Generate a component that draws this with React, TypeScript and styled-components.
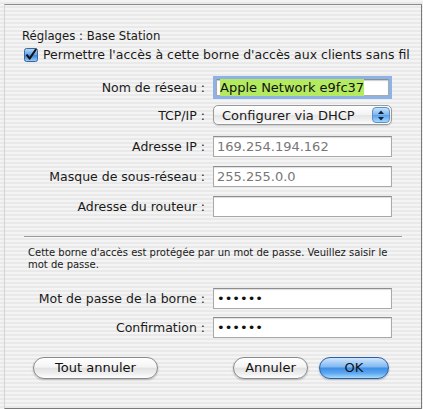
import React from 'react'
import { styled, createGlobalStyle } from 'styled-components'

const GlobalStyle = createGlobalStyle`
  html, body {
    margin: 0;
    padding: 0;
  }
  body {
    width: 423px;
    height: 409px;
    overflow: hidden;
    font-family: "DejaVu Sans", "Noto Sans", sans-serif;
    background: repeating-linear-gradient(to bottom, #f4f4f4 0px, #f4f4f4 2px, #e9e9e9 2px, #e9e9e9 4px);
  }
`

const Panel = styled.div`
  box-sizing: border-box;
  margin: 4px 2px 0 4px;
  width: 418px;
  height: 405px;
  border-top: 1px solid #8c8c8c;
  border-right: 1px solid #7a7a7a;
  border-bottom: 1px solid #7a7a7a;
  border-left: 1px solid #d4d4d4;
  display: flex;
  flex-direction: column;
  color: #1a1a1a;
`

const Title = styled.div`
  margin: 23px 0 0 17px;
  font-size: 11.7px;
  line-height: 16px;
`

const CheckRow = styled.label`
  margin: 3px 6px 0 19px;
  display: flex;
  align-items: center;
  gap: 5px;
  font-size: 12.5px;
  line-height: 16px;
  white-space: nowrap;
`

const FieldRow = styled.div<{ $top: number; $h: number }>`
  margin-top: ${p => p.$top}px;
  height: ${p => p.$h}px;
  display: flex;
  align-items: center;
  gap: 8px;
`

const Label = styled.div`
  width: 200px;
  text-align: right;
  font-size: 12.5px;
  white-space: nowrap;
`

const Field = styled.div<{ $focus?: boolean; $muted?: boolean }>`
  box-sizing: border-box;
  width: 179px;
  height: 100%;
  background: #fff;
  border: 1px solid #a9a9a9;
  border-top-color: #8d8d8d;
  display: flex;
  align-items: center;
  padding-left: 3px;
  font-size: 13px;
  color: ${p => (p.$muted ? '#777' : '#111')};
  box-shadow: ${p => (p.$focus ? '0 0 0 3px #8db3e6, inset 0 1px 1px #ccc' : 'inset 0 1px 1px #dedede')};
  ${p => (p.$focus ? 'height: 17px; margin: 0 3px 0 3px; width: 173px;' : '')}
`

const Highlight = styled.span`
  background: #b3ea5f;
  padding: 1px 0;
`

const Popup = styled.div`
  box-sizing: border-box;
  width: 179px;
  height: 100%;
  border: 1px solid #9a9a9a;
  border-radius: 5px;
  background: linear-gradient(to bottom, #ffffff 0%, #f2f2f2 50%, #e4e4e4 51%, #fbfbfb 100%);
  display: flex;
  align-items: center;
  justify-content: space-between;
  padding: 0 1px 0 8px;
  font-size: 13px;
  box-shadow: 0 1px 1px rgba(0, 0, 0, 0.15);
`

const Stepper = styled.div`
  width: 18px;
  height: 16px;
  border-radius: 4px;
  background: linear-gradient(to bottom, #c4e2fb 0%, #7ab6f0 50%, #5a9eea 51%, #a6d8fb 100%);
  border: 1px solid #5f8fc8;
  box-sizing: border-box;
  display: flex;
  align-items: center;
  justify-content: center;
`

const Separator = styled.div`
  margin: 19px 19px 0 19px;
  height: 1px;
  background: #9b9b9b;
  border-bottom: 1px solid #f8f8f8;
`

const Note = styled.p`
  margin: 9px 30px 0 23px;
  font-size: 10px;
  line-height: 12px;
`

const ButtonBar = styled.div`
  margin: 19px 32px 0 28px;
  display: flex;
  align-items: center;
  gap: 11px;
`

const Button = styled.button<{ $w: number; $default?: boolean }>`
  box-sizing: border-box;
  width: ${p => p.$w}px;
  height: 22px;
  border-radius: 11px;
  font-family: inherit;
  font-size: 13px;
  padding: 0;
  color: #111;
  border: 1px solid ${p => (p.$default ? '#2a5fa8' : '#8a8a8a')};
  background: ${p =>
    p.$default
      ? 'linear-gradient(to bottom, #cfe6fb 0%, #7fb8f2 45%, #3f8ee6 50%, #5aa6f0 75%, #a8dcfc 100%)'
      : 'linear-gradient(to bottom, #ffffff 0%, #f4f4f4 45%, #e2e2e2 52%, #f0f0f0 80%, #ffffff 100%)'};
  box-shadow: 0 1px 2px rgba(0, 0, 0, 0.25);
  line-height: 18px;
`

const Spacer = styled.div`
  flex: 1;
`

function CheckBox() {
  return (
    <svg width="14" height="14" viewBox="0 0 14 14" style={{ flex: 'none' }}>
      <defs>
        <linearGradient id="cb" x1="0" y1="0" x2="0" y2="1">
          <stop offset="0" stopColor="#b9dcfa" />
          <stop offset="0.5" stopColor="#5d9fe6" />
          <stop offset="0.55" stopColor="#3d85dc" />
          <stop offset="1" stopColor="#9fd2fb" />
        </linearGradient>
      </defs>
      <rect x="0.5" y="0.5" width="13" height="13" rx="2" fill="url(#cb)" stroke="#40679a" />
      <path d="M3 7.2 L5.6 10.6 L11.8 1.5" fill="none" stroke="#111" strokeWidth="2" strokeLinecap="round" strokeLinejoin="round" />
    </svg>
  )
}

function Arrows() {
  return (
    <svg width="8" height="11" viewBox="0 0 8 11">
      <path d="M4 0.5 L7 4 L1 4 Z" fill="#10233d" />
      <path d="M4 10.5 L7 7 L1 7 Z" fill="#10233d" />
    </svg>
  )
}

export default function App() {
  return (
    <>
      <GlobalStyle />
      <Panel>
        <Title>Réglages : Base Station</Title>
        <CheckRow>
          <CheckBox />
          <span>Permettre l'accès à cette borne d'accès aux clients sans fil</span>
        </CheckRow>

        <FieldRow $top={13} $h={23}>
          <Label>Nom de réseau :</Label>
          <Field $focus>
            <Highlight>Apple Network e9fc37</Highlight>
          </Field>
        </FieldRow>
        <FieldRow $top={6} $h={20}>
          <Label>TCP/IP :</Label>
          <Popup>
            <span>Configurer via DHCP</span>
            <Stepper>
              <Arrows />
            </Stepper>
          </Popup>
        </FieldRow>
        <FieldRow $top={11} $h={21}>
          <Label>Adresse IP :</Label>
          <Field $muted>169.254.194.162</Field>
        </FieldRow>
        <FieldRow $top={9} $h={21}>
          <Label>Masque de sous-réseau :</Label>
          <Field $muted>255.255.0.0</Field>
        </FieldRow>
        <FieldRow $top={9} $h={21}>
          <Label>Adresse du routeur :</Label>
          <Field />
        </FieldRow>

        <Separator />
        <Note>
          Cette borne d'accès est protégée par un mot de passe. Veuillez saisir le mot de passe.
        </Note>

        <FieldRow $top={17} $h={21}>
          <Label>Mot de passe de la borne :</Label>
          <Field>••••••</Field>
        </FieldRow>
        <FieldRow $top={8} $h={21}>
          <Label>Confirmation :</Label>
          <Field>••••••</Field>
        </FieldRow>

        <ButtonBar>
          <Button $w={125}>Tout annuler</Button>
          <Spacer />
          <Button $w={75}>Annuler</Button>
          <Button $w={70} $default>OK</Button>
        </ButtonBar>
      </Panel>
    </>
  )
}
